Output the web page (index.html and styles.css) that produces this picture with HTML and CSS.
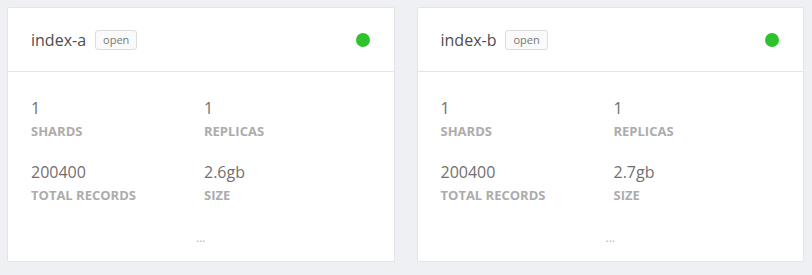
FILE: index.html
```html
<!DOCTYPE html>
<html lang="en">
<head>
    <meta charset="UTF-8">
    <meta name="viewport" content="width=device-width, initial-scale=1.0">
    <title>Indices</title>
    <link rel="stylesheet" href="styles.css">
</head>
<body>
    <div class="index-grid">
        <div class="index-card">
            <div class="card-header">
                <div class="card-title">
                    <span class="index-name">index-a</span>
                    <span class="badge">open</span>
                </div>
                <span class="status-dot"></span>
            </div>
            <div class="card-body">
                <div class="stat">
                    <div class="stat-value">1</div>
                    <div class="stat-label">Shards</div>
                </div>
                <div class="stat">
                    <div class="stat-value">1</div>
                    <div class="stat-label">Replicas</div>
                </div>
                <div class="stat">
                    <div class="stat-value">200400</div>
                    <div class="stat-label">Total Records</div>
                </div>
                <div class="stat">
                    <div class="stat-value">2.6gb</div>
                    <div class="stat-label">Size</div>
                </div>
            </div>
            <div class="card-footer">...</div>
        </div>

        <div class="index-card">
            <div class="card-header">
                <div class="card-title">
                    <span class="index-name">index-b</span>
                    <span class="badge">open</span>
                </div>
                <span class="status-dot"></span>
            </div>
            <div class="card-body">
                <div class="stat">
                    <div class="stat-value">1</div>
                    <div class="stat-label">Shards</div>
                </div>
                <div class="stat">
                    <div class="stat-value">1</div>
                    <div class="stat-label">Replicas</div>
                </div>
                <div class="stat">
                    <div class="stat-value">200400</div>
                    <div class="stat-label">Total Records</div>
                </div>
                <div class="stat">
                    <div class="stat-value">2.7gb</div>
                    <div class="stat-label">Size</div>
                </div>
            </div>
            <div class="card-footer">...</div>
        </div>
    </div>
</body>
</html>
```

FILE: styles.css
```css
body {
    font-family: "Open Sans", Arial, sans-serif;
    background-color: #eff0f3;
    margin: 0;
    padding: 7px 8px 0 7px;
}

.index-grid {
    display: grid;
    grid-template-columns: 1fr 1fr;
    column-gap: 22px;
}

.index-card {
    background-color: #ffffff;
    border: 1px solid #e3e5e9;
    border-radius: 2px;
}

.card-header {
    display: flex;
    align-items: center;
    justify-content: space-between;
    height: 63px;
    padding: 0 23px 0 23px;
    border-bottom: 1px solid #e3e5e9;
}

.card-title {
    display: flex;
    align-items: center;
    gap: 9px;
}

.index-name {
    font-size: 16px;
    color: #4d4d4d;
}

.badge {
    font-size: 11px;
    color: #777;
    background-color: #fafafa;
    border: 1px solid #dcdcdc;
    border-radius: 3px;
    padding: 1px 7px;
    line-height: 16px;
}

.status-dot {
    width: 14px;
    height: 14px;
    border-radius: 50%;
    background-color: #2fc22f;
    margin-right: 1px;
}

.card-body {
    display: grid;
    grid-template-columns: 173px 1fr;
    row-gap: 21px;
    padding: 25px 23px 0 23px;
}

.stat-value {
    font-size: 16px;
    line-height: 22px;
    color: #707070;
}

.stat-label {
    margin-top: 3px;
    font-size: 13px;
    font-weight: 700;
    line-height: 18px;
    color: #acacac;
    text-transform: uppercase;
}

.card-footer {
    text-align: center;
    font-size: 12px;
    line-height: 16px;
    color: #b5b5b5;
    margin-top: 26px;
    padding-bottom: 15px;
}
```
